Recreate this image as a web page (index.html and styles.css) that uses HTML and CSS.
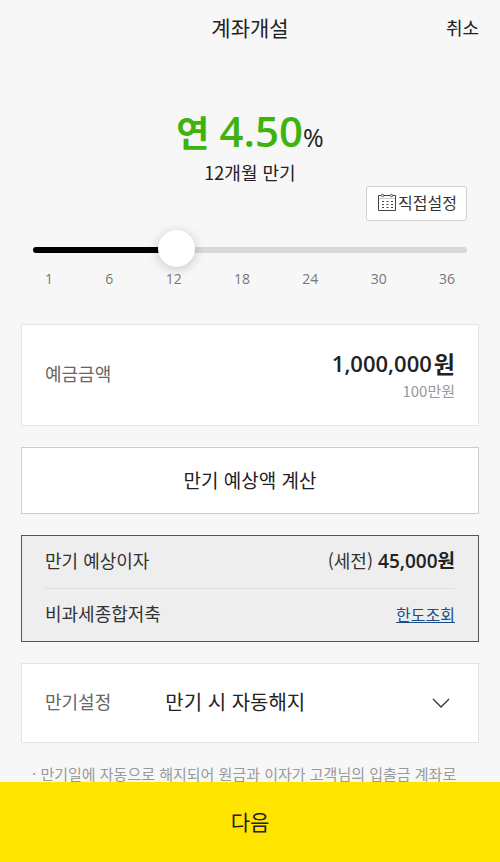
FILE: index.html
```html
<!DOCTYPE html>
<html lang="ko">
<head>
    <meta charset="UTF-8">
    <meta name="viewport" content="width=device-width, initial-scale=1.0">
    <title>계좌개설</title>
    <link rel="stylesheet" href="styles.css">
</head>
<body>
    <header class="header">
        <h1 class="title">계좌개설</h1>
        <a class="cancel" href="#">취소</a>
    </header>

    <main class="content">
        <section class="rate">
            <p class="rate-value"><span class="rate-year">연</span> <strong class="rate-num">4.50</strong><span class="rate-unit">%</span></p>
            <p class="rate-term">12개월 만기</p>
        </section>

        <section class="period">
            <button type="button" class="direct">
                <svg class="calendar" width="18" height="18" viewBox="0 0 18 18" fill="none" stroke="#444">
                    <path d="M3 2.5H.5v15h17v-15H15M6 2.5h6"/>
                    <path d="M1 5.5h16" stroke="#ccc"/>
                    <circle cx="4.500" cy="2.500" r="1.200"/>
                    <circle cx="13.500" cy="2.500" r="1.200"/>
                    <path d="M4 8.500h11M4 11.500h11M4 14.500h11" stroke-dasharray="2 2.500"/>
                </svg>
                직접설정
            </button>
            <input class="slider" type="range" min="1" max="36" value="12" aria-label="기간">
            <ul class="ticks">
                <li>1</li>
                <li>6</li>
                <li>12</li>
                <li>18</li>
                <li>24</li>
                <li>30</li>
                <li>36</li>
            </ul>
        </section>

        <section class="card amount">
            <label class="label" for="amount">예금금액</label>
            <div class="amount-box">
                <div class="amount-line">
                    <input class="amount-input" id="amount" type="text" inputmode="numeric" value="1,000,000">
                    <span>원</span>
                </div>
                <p class="amount-text">100만원</p>
            </div>
        </section>

        <button type="button" class="calc">만기 예상액 계산</button>

        <dl class="result">
            <div class="result-row">
                <dt>만기 예상이자</dt>
                <dd>(세전) <strong>45,000원</strong></dd>
            </div>
            <div class="result-row">
                <dt>비과세종합저축</dt>
                <dd><a class="limit" href="#">한도조회</a></dd>
            </div>
        </dl>

        <section class="card maturity">
            <label class="label" for="maturity">만기설정</label>
            <select class="maturity-select" id="maturity">
                <option>만기 시 자동해지</option>
            </select>
            <svg class="arrow" width="18" height="10" viewBox="0 0 18 10" fill="none" stroke="#333" stroke-width="1.300">
                <path d="M1 1l8 8 8-8"/>
            </svg>
        </section>

        <p class="note">· 만기일에 자동으로 해지되어 원금과 이자가 고객님의 입출금 계좌로</p>
    </main>

    <button type="button" class="next">다음</button>
</body>
</html>
```

FILE: styles.css
```css
* {
    box-sizing: border-box;
}
body {
    margin: 0;
    background: #f7f7f7;
    color: #222;
    font-family: "Noto Sans CJK KR", sans-serif;
    font-size: 18px;
    line-height: 24px;
}
h1, p, ul, dl, dd {
    margin: 0;
    padding: 0;
}
button, input, select {
    font-family: inherit;
    color: inherit;
}
button {
    cursor: pointer;
}
.header {
    display: grid;
    grid-template-columns: 1fr auto 1fr;
    align-items: center;
    height: 54px;
    padding: 0 21px;
}
.title {
    grid-column: 2;
    font-size: 21px;
    font-weight: 400;
}
.cancel {
    justify-self: end;
    color: #222;
    text-decoration: none;
}
.content {
    padding: 0 21px;
}
.rate {
    padding-top: 54px;
    text-align: center;
}
.rate-value {
    color: #3fb30d;
    font-size: 36px;
    line-height: 46px;
}
.rate-year {
    font-weight: 700;
}
.rate-num {
    font-family: "Open Sans", sans-serif;
    font-size: 42px;
    font-weight: 600;
}
.rate-unit {
    color: #222;
    font-family: "Open Sans", sans-serif;
    font-size: 25px;
    font-weight: 500;
}
.period {
    display: flex;
    flex-direction: column;
    padding: 0 12px;
}
.direct {
    display: flex;
    align-items: center;
    align-self: flex-end;
    gap: 2px;
    height: 35px;
    margin-top: 2px;
    padding: 0 9px 4px 11px;
    border: 1px solid #d0d0d0;
    border-radius: 3px;
    background: #fff;
    color: #333;
    font-size: 16px;
}
.slider {
    appearance: none;
    width: 100%;
    height: 37px;
    margin: 10px 0 0;
    background: none;
}
.slider::-webkit-slider-runnable-track {
    height: 6px;
    border-radius: 3px;
    background: linear-gradient(to right, #000 33%, #d8d8d8 33%);
}
.slider::-webkit-slider-thumb {
    appearance: none;
    width: 37px;
    height: 37px;
    margin-top: -17px;
    border-radius: 50%;
    background: #fff;
    box-shadow: 0 2px 12px rgba(0, 0, 0, 0.2);
}
.ticks {
    display: flex;
    justify-content: space-between;
    padding: 0 12px;
    list-style: none;
    color: #777;
    font-family: "Open Sans", sans-serif;
    font-size: 14px;
    line-height: 22px;
}
.card {
    display: flex;
    align-items: center;
    border: 1px solid #e4e4e4;
    background: #fff;
}
.label {
    padding-bottom: 4px;
    color: #666;
}
.amount {
    justify-content: space-between;
    height: 102px;
    margin-top: 34px;
    padding: 0 23px;
}
.amount-box {
    text-align: right;
}
.amount-line {
    display: flex;
    align-items: center;
    justify-content: flex-end;
    gap: 2px;
    font-size: 23px;
    font-weight: 700;
    line-height: 32px;
}
.amount-input {
    width: 160px;
    padding: 0;
    border: 0;
    background: none;
    font-family: "Open Sans", sans-serif;
    font-size: 22px;
    font-weight: 600;
    text-align: right;
}
.amount-text {
    color: #999;
    font-size: 15px;
}
.calc {
    display: block;
    width: 100%;
    height: 67px;
    margin-top: 21px;
    padding-bottom: 4px;
    border: 1px solid #ccc;
    background: #fff;
    font-size: 19px;
}
.result {
    margin-top: 21px;
    padding: 0 23px;
    border: 1px solid #555;
    background: #eee;
    color: #333;
}
.result-row {
    display: flex;
    align-items: center;
    justify-content: space-between;
    height: 52px;
    padding-bottom: 4px;
}
.result-row + .result-row {
    height: 53px;
    border-top: 1px solid #ddd;
}
.result strong {
    color: #222;
    font-family: "Open Sans", "Noto Sans CJK KR", sans-serif;
    font-size: 19px;
    font-weight: 600;
}
.limit {
    color: #1d4f86;
    font-size: 16px;
}
.maturity {
    height: 80px;
    margin-top: 21px;
    padding: 0 28px 0 23px;
}
.maturity-select {
    appearance: none;
    flex: 1;
    height: 48px;
    margin-left: 54px;
    padding: 0 0 3px;
    border: 0;
    background: none;
    font-size: 20px;
}
.arrow {
    pointer-events: none;
}
.note {
    margin-top: 19px;
    padding-left: 11px;
    color: #999;
    font-size: 15px;
    white-space: nowrap;
}
.next {
    position: fixed;
    bottom: 0;
    left: 0;
    width: 100%;
    height: 80px;
    padding-bottom: 4px;
    border: 0;
    background: #ffe400;
    font-size: 21px;
}
```
